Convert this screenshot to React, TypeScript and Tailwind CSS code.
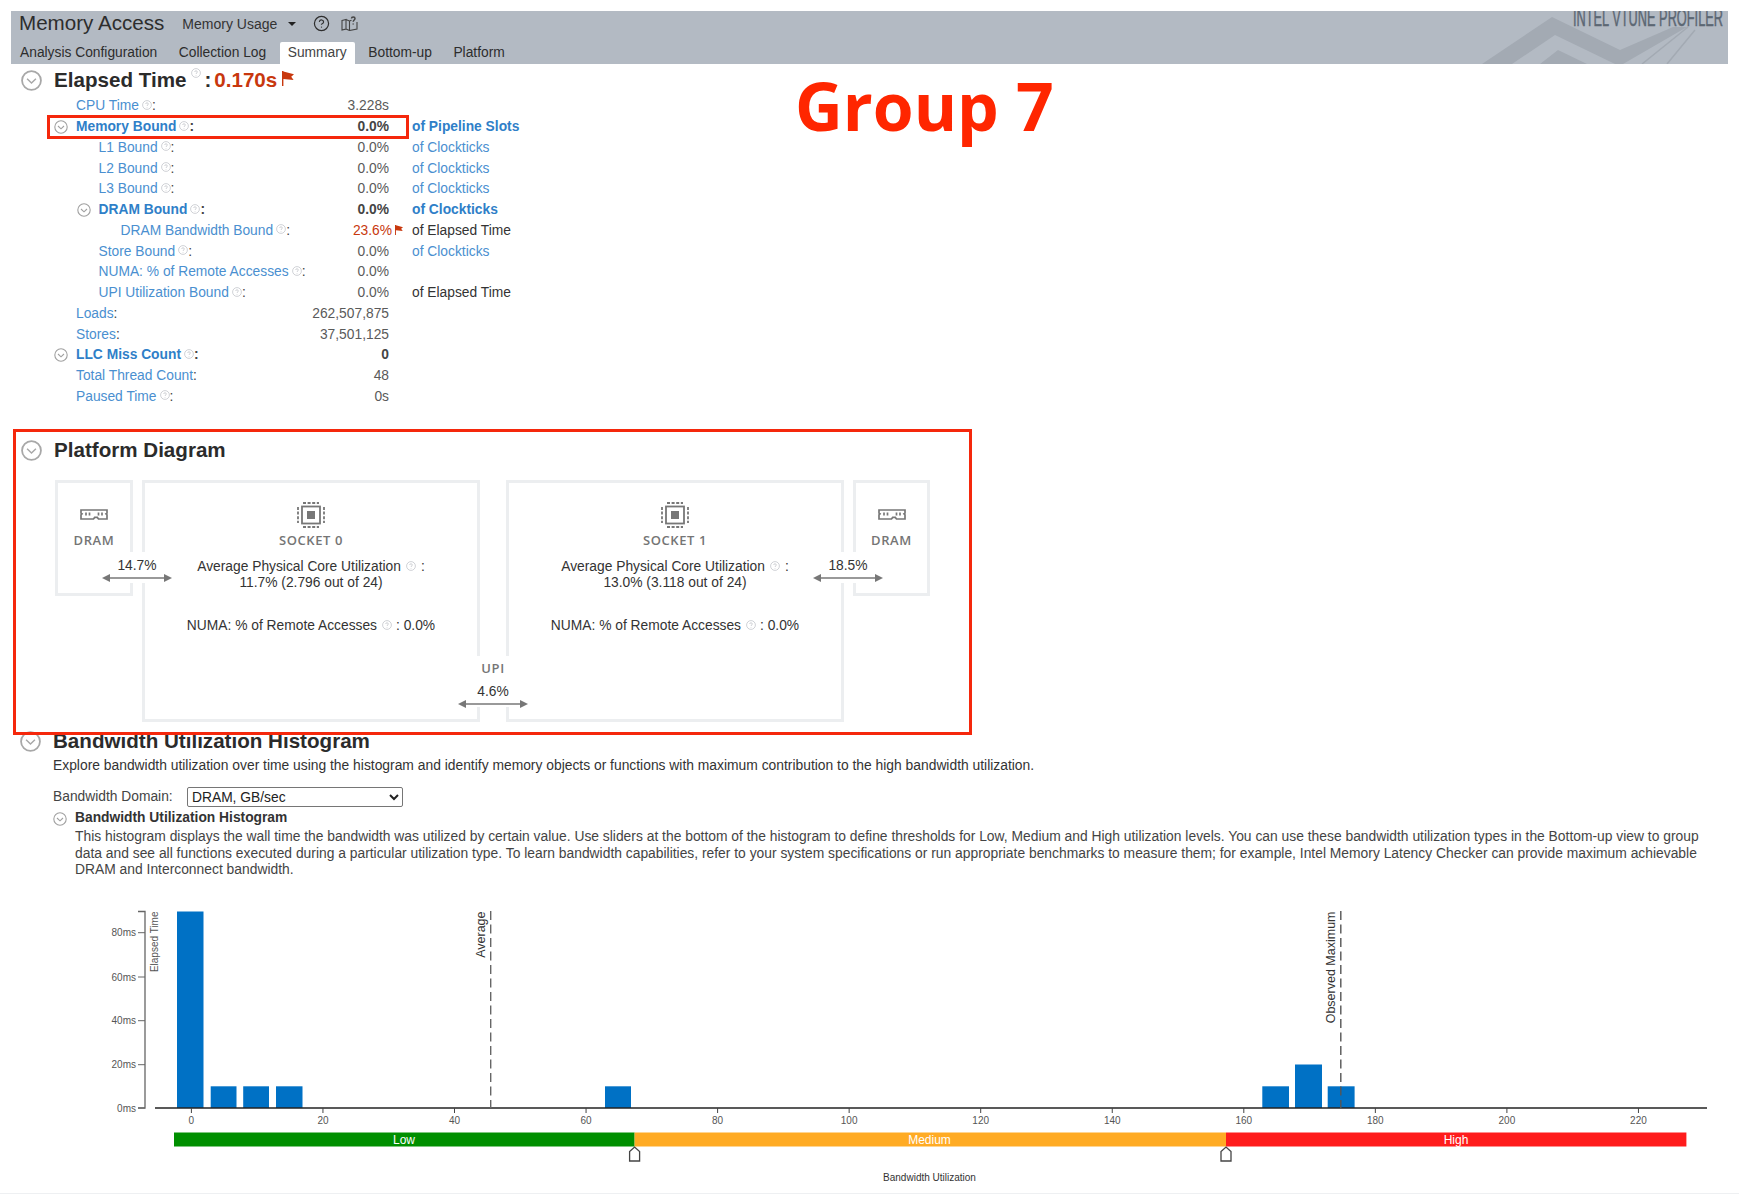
import React from "react";
import { CircleHelp } from "lucide-react";

const Help = ({ className = "" }: { className?: string }) => (
  <svg viewBox="0 0 10 10" className={`w-[10px] h-[10px] shrink-0 ${className}`} fill="none" stroke="#c4c7cb" strokeWidth="0.8">
    <circle cx="5" cy="5" r="4.4" />
    <path d="M3.7 4c0-1.7 2.6-1.7 2.6 0 0 1-1.3 1-1.3 2M5 7v.6" />
  </svg>
);

const Chev = ({ big = false }: { big?: boolean }) =>
  big ? (
    <svg viewBox="0 0 20 20" className="w-[21px] h-[21px] shrink-0" fill="none" stroke="#a8a8a8" strokeWidth="1.7">
      <circle cx="10" cy="10" r="9" />
      <path d="M5.8 8.4 10 12.4l4.2-4" strokeWidth="1.4" />
    </svg>
  ) : (
    <svg viewBox="0 0 14 14" className="w-[14px] h-[14px] shrink-0" fill="none" stroke="#a0a0a0" strokeWidth="1.1">
      <circle cx="7" cy="7" r="6.2" />
      <path d="M4 6 7 8.8 10 6" />
    </svg>
  );

const Flag = ({ className = "" }: { className?: string }) => (
  <svg viewBox="0 0 12 15" className={className} fill="#c8380e">
    <path d="M0 0h1.4v15H0zM1.4 .4 12 3.2 9.2 5.8 11.6 9 1.4 8z" />
  </svg>
);

type Row = {
  label: string;
  level: 0 | 1 | 2;
  value: string;
  unit?: string;
  bold?: boolean;
  chev?: boolean;
  help?: boolean;
  alert?: boolean;
  blackUnit?: boolean;
};

const rows: Row[] = [
  { label: "CPU Time", level: 0, value: "3.228s", help: true },
  { label: "Memory Bound", level: 0, value: "0.0%", unit: "of Pipeline Slots", bold: true, chev: true, help: true },
  { label: "L1 Bound", level: 1, value: "0.0%", unit: "of Clockticks", help: true },
  { label: "L2 Bound", level: 1, value: "0.0%", unit: "of Clockticks", help: true },
  { label: "L3 Bound", level: 1, value: "0.0%", unit: "of Clockticks", help: true },
  { label: "DRAM Bound", level: 1, value: "0.0%", unit: "of Clockticks", bold: true, chev: true, help: true },
  { label: "DRAM Bandwidth Bound", level: 2, value: "23.6%", unit: "of Elapsed Time", help: true, alert: true, blackUnit: true },
  { label: "Store Bound", level: 1, value: "0.0%", unit: "of Clockticks", help: true },
  { label: "NUMA: % of Remote Accesses", level: 1, value: "0.0%", help: true },
  { label: "UPI Utilization Bound", level: 1, value: "0.0%", unit: "of Elapsed Time", help: true, blackUnit: true },
  { label: "Loads", level: 0, value: "262,507,875" },
  { label: "Stores", level: 0, value: "37,501,125" },
  { label: "LLC Miss Count", level: 0, value: "0", bold: true, chev: true, help: true },
  { label: "Total Thread Count", level: 0, value: "48" },
  { label: "Paused Time", level: 0, value: "0s", help: true },
];

const indent: Record<number, string> = { 0: "w-[76px]", 1: "w-[98.5px]", 2: "w-[120.5px]" };

const MetricRow = ({ r }: { r: Row }) => (
  <div className="flex items-center h-[20.75px] text-[13.8px] leading-none">
    <div className="w-[389px] shrink-0 flex items-center">
      <div className={`${indent[r.level]} shrink-0 flex justify-end pr-[8px]`}>{r.chev && <Chev />}</div>
      <div className={`flex-1 flex items-center ${r.bold ? "font-bold text-[#2f7fc8]" : "text-[#4a8fd0]"}`}>
        <span className="whitespace-nowrap">{r.label}</span>
        {r.help && <Help className="ml-[3px] -mt-[3px]" />}
        <span className="text-[#444]">:</span>
      </div>
      <div className={`relative shrink-0 ${r.alert ? "text-[#c8380e] translate-x-[3px]" : r.bold ? "font-bold text-[#444]" : "text-[#5a5a5a]"}`}>
        {r.value}
        {r.alert && <Flag className="absolute left-[calc(100%+3px)] top-[1px] w-[8px] h-[10px]" />}
      </div>
    </div>
    {r.unit && (
      <div className={`ml-[23px] whitespace-nowrap ${r.blackUnit ? "text-[#333]" : r.bold ? "font-bold text-[#2f7fc8]" : "text-[#4a8fd0]"}`}>{r.unit}</div>
    )}
  </div>
);

const Heading = ({ children, className = "ml-[21px]" }: { children: React.ReactNode; className?: string }) => (
  <h2 className={`flex items-center gap-[12px] text-[20.6px] leading-none font-bold text-[#2b2b2b] ${className}`}>
    <Chev big />
    {children}
  </h2>
);

const Arrow = ({ className = "" }: { className?: string }) => (
  <svg viewBox="0 0 70 8" className={`w-[70px] h-[8px] shrink-0 ${className}`} fill="#777">
    <path d="M6 3.200h58v1.600H6z" />
    <path d="M0 4 8 0v8zM70 4 62 0v8z" />
  </svg>
);

const DramIcon = () => (
  <svg viewBox="0 0 28 12" className="w-[28px] h-[12px]" fill="none" stroke="#777" strokeWidth="1.700">
    <path d="M1 1h26v3l-1 .8 1 1V10H18.500l-1.200-1.600h-2.600L13.500 10H1V5.800l1-1-1-.8z" />
    <path d="M6 3.500v3M9.500 3.500v3M18.500 3.500v3M22 3.500v3" />
  </svg>
);

const ChipIcon = () => (
  <svg viewBox="0 0 28 26" className="w-[28px] h-[26px]" fill="none" stroke="#777">
    <path d="M6 1H22M6 25H22M1 5V21M27 5V21" strokeWidth="1.800" strokeDasharray="3 1.600" />
    <rect x="5" y="4.500" width="18" height="17" strokeWidth="1.800" />
    <rect x="10" y="9" width="8" height="8" fill="#777" stroke="none" />
  </svg>
);

const Dram = ({ className }: { className: string }) => (
  <div className={`absolute top-0 h-[116px] border-[3px] border-[#eceef0] flex flex-col items-center pt-[26px] ${className}`}>
    <DramIcon />
    <div className="mt-[11px] text-[13px] leading-4 tracking-[0.6px] font-semibold text-[#757575] font-['Open_Sans',sans-serif]">DRAM</div>
  </div>
);

const Socket = ({ name, util }: { name: string; util: string }) => (
  <div className="h-full flex flex-col items-center pt-[19px] text-[13.8px] leading-[16px] text-[#333]">
    <ChipIcon />
    <div className="mt-[4px] text-[13px] leading-4 tracking-[0.6px] font-semibold text-[#757575] font-['Open_Sans',sans-serif]">{name}</div>
    <div className="mt-[11px] text-center">
      <div className="flex items-center justify-center">
        Average Physical Core Utilization
        <Help className="ml-[5px] mr-[5px] -mt-[3px]" />:
      </div>
      <div>{util}</div>
    </div>
    <div className="mt-[27px] flex items-center">
      NUMA: % of Remote Accesses
      <Help className="ml-[5px] mr-[4px] -mt-[3px]" />: 0.0%
    </div>
  </div>
);

const Link = ({ pct, center }: { pct: string; center: string }) => (
  <div className={`absolute top-[72px] w-[70px] h-[31px] bg-white flex flex-col items-center ${center}`}>
    <div className="text-[13.8px] leading-4 text-[#333] mt-[6px]">{pct}</div>
    <Arrow />
  </div>
);

const bars: [number, number, number][] = [
  [177, 203.5, 911.5],
  [210.7, 236.5, 1086.3],
  [243.2, 269, 1086.3],
  [276, 302.5, 1086.3],
  [605, 631, 1086.3],
  [1262.3, 1289, 1086.3],
  [1295, 1322, 1064.5],
  [1327.7, 1354.6, 1086.3],
];

const Chart = () => {
  const xTicks = Array.from({ length: 12 }, (_, i) => i * 20);
  const yTicks: [string, number][] = [
    ["80ms", 932.7],
    ["60ms", 977],
    ["40ms", 1020.7],
    ["20ms", 1064.7],
    ["0ms", 1108],
  ];
  const x0 = 191.4;
  const step = 131.55;
  return (
    <svg viewBox="0 890 1739 303" className="w-full h-[303px] block" fontFamily="'Liberation Sans', Arial, sans-serif">
      {bars.map(([a, b, t]) => (
        <rect key={a} x={a} y={t} width={b - a} height={1108 - t} fill="#0071c5" />
      ))}
      <path d="M138 911.5H145V1108H138" fill="none" stroke="#666" strokeWidth="1.3" />
      {yTicks.map(([l, y]) => (
        <g key={l}>
          <path d={`M138 ${y}H145`} stroke="#666" strokeWidth="1" />
          <text x="136" y={y + 3.5} textAnchor="end" fontSize="10" fill="#555">{l}</text>
        </g>
      ))}
      <text transform="translate(158 911.5) rotate(-90)" textAnchor="end" fontSize="10" fill="#555">Elapsed Time</text>
      <path d="M155 1108H1707" stroke="#222" strokeWidth="1.3" />
      {xTicks.map((t, i) => (
        <g key={t}>
          <path d={`M${x0 + i * step} 1108v5`} stroke="#444" strokeWidth="1" />
          <text x={x0 + i * step} y="1123.5" textAnchor="middle" fontSize="10" fill="#555">{t}</text>
        </g>
      ))}
      <path d="M490.7 911V1108" stroke="#666" strokeWidth="1.4" strokeDasharray="9 4.5" />
      <text transform="translate(485 911.5) rotate(-90)" textAnchor="end" fontSize="12.5" fill="#333">Average</text>
      <path d="M1340.8 911V1108" stroke="#555" strokeWidth="1.4" strokeDasharray="9 4.5" />
      <text transform="translate(1335 911.5) rotate(-90)" textAnchor="end" fontSize="12.5" fill="#333">Observed Maximum</text>
      <rect x="174" y="1132.5" width="460.6" height="14" fill="#008f00" />
      <rect x="634.6" y="1132.5" width="591.4" height="14" fill="#ffab24" />
      <rect x="1226" y="1132.5" width="460.4" height="14" fill="#ff1c1c" />
      <text x="404" y="1143.5" textAnchor="middle" fontSize="12" fill="#fff">Low</text>
      <text x="929.5" y="1143.5" textAnchor="middle" fontSize="12" fill="#fff">Medium</text>
      <text x="1456" y="1143.5" textAnchor="middle" fontSize="12" fill="#fff">High</text>
      {[634.6, 1226].map((x) => (
        <path key={x} d={`M${x - 5} 1161V1151.5L${x} 1147L${x + 5} 1151.5V1161Z`} fill="#fff" stroke="#444" strokeWidth="1.3" />
      ))}
      <text x="929.5" y="1181" textAnchor="middle" fontSize="10" fill="#333">Bandwidth Utilization</text>
    </svg>
  );
};

export default function App() {
  return (
    <div className="relative w-[1739px] h-[1194px] overflow-hidden bg-white pt-[11px] border-b border-[#eef0f2] font-['Liberation_Sans',Arial,sans-serif] text-[#333]">
      {/* Header */}
      <header className="relative mx-[11px] w-[1717px] h-[53px] bg-[#b3bac3] overflow-hidden">
        <svg viewBox="11 11 1717 53" className="absolute inset-0 w-full h-full" fontFamily="'Liberation Sans', sans-serif">
          <path d="M1482 64 1552 17l68 33 53-23h14l-64 37h-8l-60-29-43 29z" fill="#a3aab3" />
          <path d="M1540 64l18-14 29 14z" fill="#a3aab3" />
          <path d="M1642 64 1688 27M1667 64 1695 30" stroke="#a3aab3" strokeWidth="1.5" />
          <text x="1573" y="26" fontSize="24" fontWeight="400" fill="#5c6773" stroke="#5c6773" strokeWidth="0.5" textLength="150" lengthAdjust="spacingAndGlyphs">INTEL VTUNE PROFILER</text>
        </svg>
        <div className="relative h-[25px] mb-[6px] flex items-center pl-[8px]">
          <span className="text-[20.6px] leading-none text-[#2d2d2d]">Memory Access</span>
          <span className="ml-[18px] text-[14px] leading-none text-[#333]">Memory Usage</span>
          <span className="ml-[11px] w-0 h-0 border-x-[4px] border-x-transparent border-t-[4px] border-t-[#222]" />
          <CircleHelp className="ml-[17px] w-[17px] h-[17px] text-[#2d2d2d]" strokeWidth={1.7} />
          <svg viewBox="0 0 17 15" className="ml-[11px] w-[17px] h-[15px]" fill="none" stroke="#444" strokeWidth="1.1">
            <path d="M1 4.500 5 3.500v9.500l-4 1zM5 3.500l3.500 1.500v9.500L5 13M8.500 5l2-.8M8.500 14.500l7.500-1.500V6" />
            <path d="M10.500 2.500C10.500.5 14 .5 14 2.500c0 1.500-1.800 1.500-1.800 3.300M12.200 7.500v1" strokeWidth="1.5" />
          </svg>
        </div>
        <nav className="relative h-[22px] flex items-stretch gap-[5.5px] pl-px text-[13.8px]">
          {["Analysis Configuration", "Collection Log", "Summary", "Bottom-up", "Platform"].map((t) => (
            <div
              key={t}
              className={`px-[8px] pt-px flex items-center rounded-t-[2px] whitespace-nowrap ${t === "Summary" ? "bg-white text-[#444]" : "text-[#2d2d2d]"}`}
            >
              {t}
            </div>
          ))}
        </nav>
      </header>

      {/* Elapsed Time */}
      <section>
        <div className="h-[32px] flex items-center">
          <Heading>
            <span className="flex items-center">
              Elapsed Time
              <Help className="ml-[5px] -mt-[14px]" />
              <span className="ml-[3px]">:</span>
              <span className="ml-[3px] text-[#c8380e]">0.170s</span>
              <Flag className="ml-[5px] -mt-[3px] w-[12px] h-[15px]" />
            </span>
          </Heading>
        </div>
        <div className="w-[700px]">
          {rows.map((r) => (
            <MetricRow key={r.label} r={r} />
          ))}
        </div>
      </section>

      {/* Platform Diagram */}
      <section className="mt-[27px]">
        <div className="h-[32px] flex items-center">
          <Heading>Platform Diagram</Heading>
        </div>
        <div className="relative mt-[14px] h-[242px]">
          <Dram className="left-[55px] w-[78px]" />
          <div className="absolute top-0 left-[142px] w-[338px] h-[242px] border-[3px] border-[#eceef0]">
            <Socket name="SOCKET 0" util="11.7% (2.796 out of 24)" />
          </div>
          <div className="absolute top-0 left-[506px] w-[338px] h-[242px] border-[3px] border-[#eceef0]">
            <Socket name="SOCKET 1" util="13.0% (3.118 out of 24)" />
          </div>
          <Dram className="left-[853px] w-[77px]" />
          <Link pct="14.7%" center="left-[102px]" />
          <Link pct="18.5%" center="left-[813px]" />
          <div className="absolute top-[176px] left-[458px] w-[70px] h-[51px] bg-white flex flex-col items-center">
            <div className="mt-[4px] text-[13px] leading-4 tracking-[0.6px] font-semibold text-[#757575] font-['Open_Sans',sans-serif]">UPI</div>
            <div className="mt-[8px] text-[13.8px] leading-4 text-[#333]">4.6%</div>
            <Arrow />
          </div>
        </div>
      </section>

      {/* Histogram */}
      <section>
        <div className="mt-[4px] h-[30px] flex items-center">
          <Heading className="ml-[20px]">Bandwidth Utilization Histogram</Heading>
        </div>
        <p className="ml-[53px] mt-px text-[13.85px] leading-4 text-[#333]">
          Explore bandwidth utilization over time using the histogram and identify memory objects or functions with maximum contribution to the high bandwidth utilization.
        </p>
        <div className="ml-[53px] mt-[14px] h-[20px] flex items-center text-[13.8px]">
          <span className="w-[134px] text-[#444]">Bandwidth Domain:</span>
          <select className="w-[216px] h-[20px] border border-[#767676] rounded-[2px] bg-white text-[13.8px] leading-none text-[#222]" defaultValue="dram">
            <option value="dram">DRAM, GB/sec</option>
          </select>
        </div>
        <div className="ml-[53px] mt-[2px] h-[19px] flex items-center gap-[8px] text-[13.8px] font-bold text-[#333]">
          <Chev />
          Bandwidth Utilization Histogram
        </div>
        <p className="ml-[75px] mr-[30px] text-[13.85px] leading-[16.4px] text-[#444]">
          This histogram displays the wall time the bandwidth was utilized by certain value. Use sliders at the bottom of the histogram to define thresholds for Low, Medium and High utilization levels. You can use these bandwidth utilization types in the Bottom-up view to group data and see all functions executed during a particular utilization type. To learn bandwidth capabilities, refer to your system specifications or run appropriate benchmarks to measure them; for example, Intel Memory Latency Checker can provide maximum achievable DRAM and Interconnect bandwidth.
        </p>
        <div className="mt-[13px]">
          <Chart />
        </div>
      </section>

      {/* Annotations */}
      <div className="absolute left-[47px] top-[115px] w-[362px] h-[24px] border-[3px] border-[#f5280c]" />
      <div className="absolute left-[13px] top-[429px] w-[959px] h-[306px] border-[3px] border-[#f5280c]" />
      <div className="absolute left-[795px] top-[60px] text-[66px] leading-[90px] font-bold text-[#ff2600] font-['Open_Sans',sans-serif]">Group 7</div>
    </div>
  );
}
